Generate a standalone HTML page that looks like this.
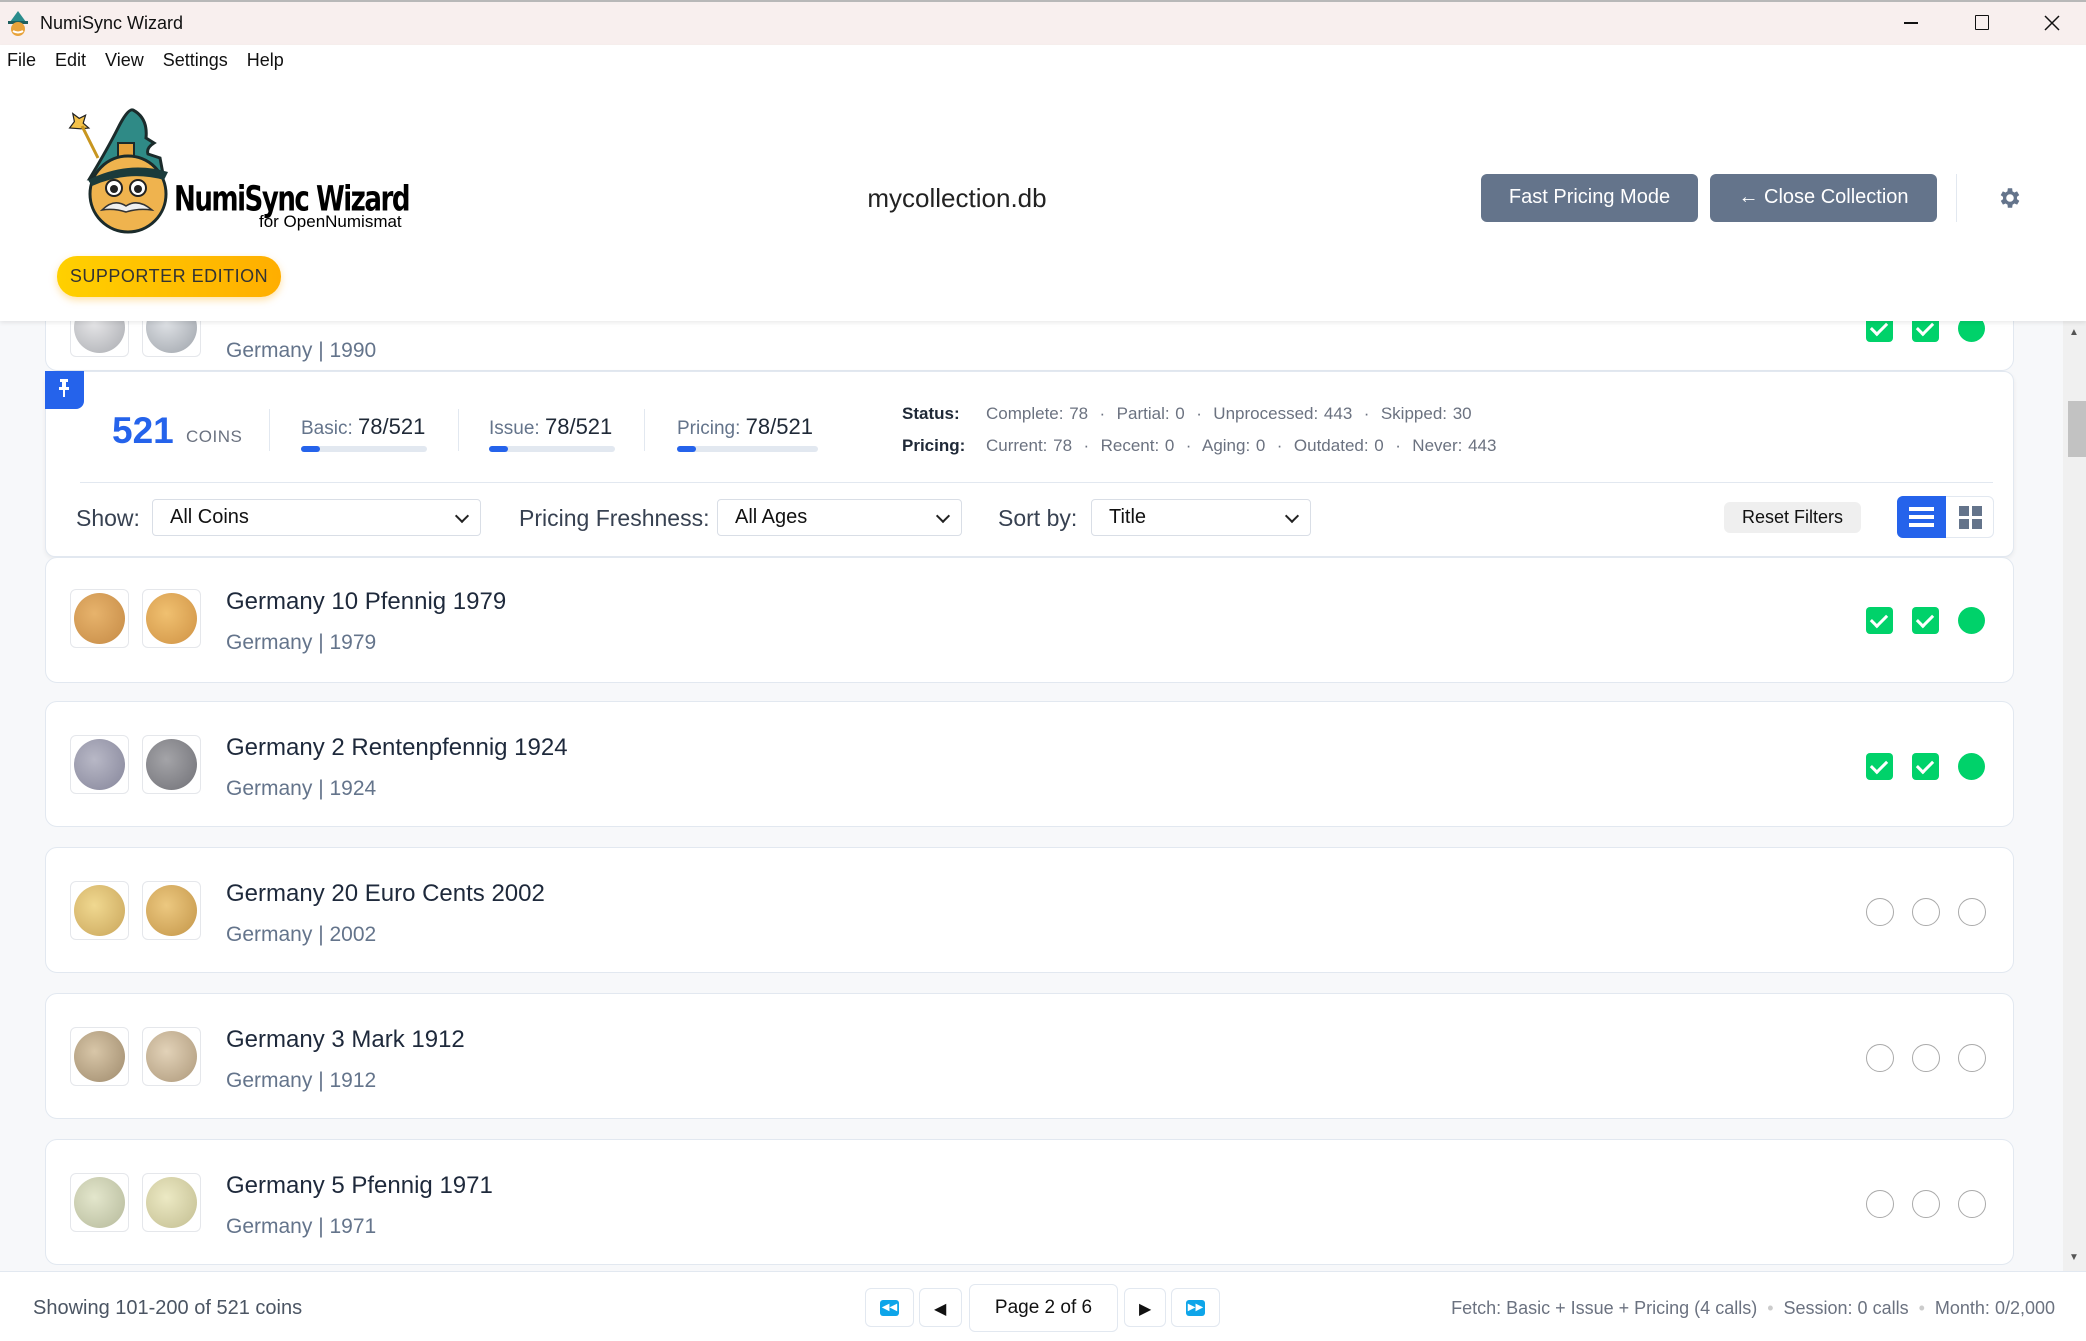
<!DOCTYPE html>
<html><head><meta charset="utf-8">
<style>
*{box-sizing:border-box;margin:0;padding:0}
body{width:2086px;height:1341px;overflow:hidden;position:relative;background:#f7f8fa;font-family:"Liberation Sans",sans-serif;color:#1f2937}
.a{position:absolute}
.card{position:absolute;left:45px;width:1969px;height:126px;background:#fff;border:1px solid #e2e8f0;border-radius:12px}
.coin{position:absolute;width:59px;height:59px;border:1px solid #e5e7eb;border-radius:6px;background:#fff}
.coin i{position:absolute;left:3px;top:3px;width:51px;height:51px;border-radius:50%}
.ct{position:absolute;left:226px;font-size:24px;color:#1e293b}
.cs{position:absolute;left:226px;font-size:21px;color:#64748b}
.ck{position:absolute;width:27px;height:27px;border-radius:4px;background:#00d26a}
.ck:after{content:"";position:absolute;left:8px;top:4px;width:7px;height:13px;border:solid #fff;border-width:0 3px 3px 0;transform:rotate(45deg)}
.dot{position:absolute;width:27px;height:27px;border-radius:50%;background:#00d26a}
.ring{position:absolute;width:28px;height:28px;border-radius:50%;border:1.5px solid #aaa}
.sel{position:absolute;height:37px;border:1px solid #d9dee6;border-radius:4px;background:#fff;font-size:20px;padding:6px 0 0 17px;color:#111}
.sel:after{content:"";position:absolute;right:13px;top:11px;width:8px;height:8px;border:solid #222;border-width:0 2px 2px 0;transform:rotate(45deg)}
.lbl{position:absolute;font-size:23px;color:#374151}
.st{position:absolute;font-size:17px;color:#6b7280}
.st b{color:#1f2937;font-weight:bold}
.pb{position:absolute;height:6px;width:126px;background:#e2e8f0;border-radius:3px}
.pb i{position:absolute;left:0;top:0;height:6px;width:19px;background:#2563eb;border-radius:3px}
.btn{position:absolute;background:#64748b;color:#fff;border-radius:6px;font-size:20px;text-align:center;line-height:47px}
.pg{position:absolute;border:1px solid #e2e8f0;border-radius:6px;background:#fff}
</style></head><body>
<!-- scrollbar -->
<div class="a" style="left:2063px;top:321px;width:23px;height:950px;background:#f0f0f0"></div>
<div class="a" style="left:2068px;top:401px;width:18px;height:56px;background:#c2c2c2"></div>
<div class="a" style="left:2069px;top:327px;font-size:10px;color:#555">▲</div>
<div class="a" style="left:2069px;top:1252px;font-size:10px;color:#555">▼</div>
<!-- partial card -->
<div class="card" style="top:300px;height:71px;border-top:none;border-radius:0 0 12px 12px"></div>
<div class="coin" style="left:70px;top:310px;height:47px;border-top:none"><i style="top:-8px;background:radial-gradient(circle at 40% 40%,#e6e6e8,#a9abb0)"></i></div>
<div class="coin" style="left:142px;top:310px;height:47px;border-top:none"><i style="top:-8px;background:radial-gradient(circle at 40% 40%,#dfe2e6,#9ea3aa)"></i></div>
<div class="cs" style="top:339px">Germany | 1990</div>
<div class="ck" style="left:1866px;top:315px"></div>
<div class="ck" style="left:1912px;top:315px"></div>
<div class="dot" style="left:1958px;top:315px"></div>

<!-- title bar -->
<div class="a" style="left:0;top:0;width:2086px;height:45px;background:#f8efee;border-top:2px solid #b8b8b8"></div>
<svg class="a" style="left:6px;top:10px" width="24" height="26" viewBox="0 0 24 26"><path d="M4 12 L12 1 L20 12 Z" fill="#2a8c8c"/><rect x="2" y="11" width="20" height="3" fill="#1f5f5f"/><circle cx="12" cy="19" r="7" fill="#e8a33b"/><path d="M7 21 q5 3 10 0" stroke="#fff" stroke-width="2" fill="none"/></svg>
<div class="a" style="left:40px;top:13px;font-size:18px;color:#111">NumiSync Wizard</div>
<div class="a" style="left:1904px;top:22px;width:14px;height:1.5px;background:#111"></div>
<div class="a" style="left:1975px;top:15px;width:14px;height:15px;border:1.5px solid #111;border-radius:1px"></div>
<svg class="a" style="left:2044px;top:15px" width="16" height="16"><path d="M1 1L15 15M15 1L1 15" stroke="#111" stroke-width="1.5"/></svg>
<!-- header -->
<div class="a" style="left:0;top:45px;width:2086px;height:276px;background:#fff;box-shadow:0 2px 4px rgba(0,0,0,.08)"></div>
<div class="a" style="left:7px;top:50px;font-size:18px;color:#111;word-spacing:14px">File Edit View Settings Help</div>
<!-- logo -->
<svg class="a" style="left:68px;top:108px" width="130" height="126" viewBox="0 0 130 126">
<path d="M2 20 L8 12 L6 2 L14 8 L22 4 L19 14 L26 20 L16 21 Z" fill="#f4c24a" stroke="#222" stroke-width="1.5" transform="translate(0,4) scale(.8)"/>
<line x1="14" y1="18" x2="30" y2="50" stroke="#c8961f" stroke-width="3"/>
<path d="M22 70 Q40 40 50 20 Q60 0 65 2 Q80 10 78 30 L86 35 Q78 40 80 46 L92 50 L95 66 Q60 58 22 70 Z" fill="#2f8a86" stroke="#1b2b2b" stroke-width="3"/>
<rect x="50" y="35" width="16" height="16" fill="#e8a33b" stroke="#1b2b2b" stroke-width="2"/>
<circle cx="60" cy="86" r="38" fill="#efb34e" stroke="#1b2b2b" stroke-width="3"/>
<circle cx="46" cy="80" r="8" fill="#fff" stroke="#222" stroke-width="2"/><circle cx="70" cy="80" r="8" fill="#fff" stroke="#222" stroke-width="2"/>
<circle cx="46" cy="81" r="4" fill="#222"/><circle cx="70" cy="81" r="4" fill="#222"/>
<path d="M34 102 Q46 90 58 98 Q70 90 84 102 Q70 100 58 104 Q46 100 34 102Z" fill="#f0f0f0" stroke="#333" stroke-width="1.5"/>
<path d="M20 72 Q60 52 100 64 L96 72 Q60 62 24 78 Z" fill="#1b3b3b"/>
</svg>
<div class="a" style="left:174px;top:178px;font-size:29px;font-weight:bold;color:#000;letter-spacing:-1.5px;transform:scaleY(1.2);transform-origin:left top;font-family:'DejaVu Sans Condensed','Liberation Sans Narrow',sans-serif">NumiSync Wizard</div>
<div class="a" style="left:259px;top:212px;font-size:17px;color:#000">for OpenNumismat</div>
<div class="a" style="left:57px;top:256px;width:224px;height:41px;border-radius:20px;background:linear-gradient(90deg,#ffd000,#ffae00);box-shadow:0 3px 8px rgba(255,170,0,.35);font-size:18px;color:#333;text-align:center;line-height:41px;letter-spacing:.5px">SUPPORTER EDITION</div>
<div class="a" style="left:820px;width:274px;top:183px;font-size:26px;color:#222;text-align:center">mycollection.db</div>
<div class="btn" style="left:1481px;top:174px;width:217px;height:48px">Fast Pricing Mode</div>
<div class="btn" style="left:1710px;top:174px;width:227px;height:48px">← Close Collection</div>
<div class="a" style="left:1956px;top:174px;width:1px;height:48px;background:#e2e8f0"></div>
<svg class="a" style="left:1997px;top:185px" width="26" height="26" viewBox="0 0 24 24"><path fill="#64748b" d="M19.4 13a7.5 7.5 0 0 0 0-2l2.1-1.6-2-3.5-2.5 1a7 7 0 0 0-1.7-1L15 3h-4l-.4 2.9a7 7 0 0 0-1.7 1l-2.5-1-2 3.5L6.6 11a7.5 7.5 0 0 0 0 2l-2.1 1.6 2 3.5 2.5-1a7 7 0 0 0 1.7 1L11 21h4l.4-2.9a7 7 0 0 0 1.7-1l2.5 1 2-3.5zM13 15.5a3.5 3.5 0 1 1 0-7 3.5 3.5 0 0 1 0 7z" transform="translate(-1 0)"/></svg>

<!-- stats panel -->
<div class="a" style="left:45px;top:371px;width:1969px;height:186px;background:#fff;border:1px solid #e2e8f0;border-radius:10px;box-shadow:0 2px 5px rgba(0,0,0,.06)"></div>
<div class="a" style="left:45px;top:371px;width:39px;height:38px;background:#2563eb;border-radius:0 0 8px 0"></div>
<svg class="a" style="left:57px;top:378px" width="14" height="20" viewBox="0 0 14 20"><rect x="3" y="1" width="8" height="3" fill="#fff"/><rect x="5" y="3" width="4" height="7" fill="#fff"/><rect x="2" y="9" width="10" height="3" fill="#fff"/><rect x="6" y="12" width="2" height="7" fill="#fff"/></svg>
<div class="a" style="left:112px;top:410px;font-size:37px;font-weight:bold;color:#2563eb">521</div>
<div class="a" style="left:186px;top:427px;font-size:17px;color:#6b7280;letter-spacing:.5px">COINS</div>
<div class="a" style="left:269px;top:409px;width:1px;height:42px;background:#e2e8f0"></div>
<div class="a" style="left:458px;top:409px;width:1px;height:42px;background:#e2e8f0"></div>
<div class="a" style="left:644px;top:409px;width:1px;height:42px;background:#e2e8f0"></div>
<div class="a" style="left:301px;top:414px;font-size:19px;color:#64748b">Basic: <span style="font-size:22px;color:#1f2937">78/521</span></div>
<div class="a" style="left:489px;top:414px;font-size:19px;color:#64748b">Issue: <span style="font-size:22px;color:#1f2937">78/521</span></div>
<div class="a" style="left:677px;top:414px;font-size:19px;color:#64748b">Pricing: <span style="font-size:22px;color:#1f2937">78/521</span></div>
<div class="pb" style="left:301px;top:446px"><i></i></div>
<div class="pb" style="left:489px;top:446px"><i></i></div>
<div class="pb" style="left:677px;top:446px;width:141px"><i></i></div>
<div class="st" style="left:902px;top:404px"><b>Status:</b></div>
<div class="st" style="left:902px;top:436px"><b>Pricing:</b></div>
<div class="st" style="left:986px;top:404px;word-spacing:1px">Complete: 78 &nbsp;·&nbsp; Partial: 0 &nbsp;·&nbsp; Unprocessed: 443 &nbsp;·&nbsp; Skipped: 30</div>
<div class="st" style="left:986px;top:436px;word-spacing:1px">Current: 78 &nbsp;·&nbsp; Recent: 0 &nbsp;·&nbsp; Aging: 0 &nbsp;·&nbsp; Outdated: 0 &nbsp;·&nbsp; Never: 443</div>
<div class="a" style="left:80px;top:482px;width:1913px;height:1px;background:#e2e8f0"></div>
<div class="lbl" style="left:76px;top:505px">Show:</div>
<div class="sel" style="left:152px;top:499px;width:329px">All Coins</div>
<div class="lbl" style="left:519px;top:505px">Pricing Freshness:</div>
<div class="sel" style="left:717px;top:499px;width:245px">All Ages</div>
<div class="lbl" style="left:998px;top:505px">Sort by:</div>
<div class="sel" style="left:1091px;top:499px;width:220px">Title</div>
<div class="a" style="left:1724px;top:502px;width:137px;height:31px;background:#efefef;border-radius:6px;font-size:18px;color:#111;text-align:center;line-height:31px">Reset Filters</div>
<div class="a" style="left:1897px;top:496px;width:97px;height:42px;border:1px solid #e2e8f0;border-radius:6px;background:#fff"></div>
<div class="a" style="left:1897px;top:496px;width:49px;height:42px;background:#2563eb;border-radius:6px 0 0 6px"></div>
<div class="a" style="left:1909px;top:507px;width:25px;height:4px;background:#fff"></div>
<div class="a" style="left:1909px;top:515px;width:25px;height:4px;background:#fff"></div>
<div class="a" style="left:1909px;top:523px;width:25px;height:4px;background:#fff"></div>
<div class="a" style="left:1959px;top:506px;width:10px;height:10px;background:#64748b"></div>
<div class="a" style="left:1972px;top:506px;width:10px;height:10px;background:#64748b"></div>
<div class="a" style="left:1959px;top:519px;width:10px;height:10px;background:#64748b"></div>
<div class="a" style="left:1972px;top:519px;width:10px;height:10px;background:#64748b"></div>

<!-- cards -->
<div class="card" style="top:557px"></div>
<div class="coin" style="left:70px;top:589px"><i style="background:radial-gradient(circle at 40% 40%,#e7b36c,#c58a45)"></i></div>
<div class="coin" style="left:142px;top:589px"><i style="background:radial-gradient(circle at 40% 40%,#f0c070,#cf9244)"></i></div>
<div class="ct" style="top:588px">Germany 10 Pfennig 1979</div>
<div class="cs" style="top:631px">Germany | 1979</div>
<div class="ck" style="left:1866px;top:607px"></div><div class="ck" style="left:1912px;top:607px"></div><div class="dot" style="left:1958px;top:607px"></div>

<div class="card" style="top:701px"></div>
<div class="coin" style="left:70px;top:735px"><i style="background:radial-gradient(circle at 40% 40%,#b8b8c6,#85859a)"></i></div>
<div class="coin" style="left:142px;top:735px"><i style="background:radial-gradient(circle at 40% 40%,#a4a4a8,#707076)"></i></div>
<div class="ct" style="top:734px">Germany 2 Rentenpfennig 1924</div>
<div class="cs" style="top:777px">Germany | 1924</div>
<div class="ck" style="left:1866px;top:753px"></div><div class="ck" style="left:1912px;top:753px"></div><div class="dot" style="left:1958px;top:753px"></div>

<div class="card" style="top:847px"></div>
<div class="coin" style="left:70px;top:881px"><i style="background:radial-gradient(circle at 40% 40%,#f0d890,#c9a55a)"></i></div>
<div class="coin" style="left:142px;top:881px"><i style="background:radial-gradient(circle at 40% 40%,#ecc880,#c39548)"></i></div>
<div class="ct" style="top:880px">Germany 20 Euro Cents 2002</div>
<div class="cs" style="top:923px">Germany | 2002</div>
<div class="ring" style="left:1866px;top:898px"></div><div class="ring" style="left:1912px;top:898px"></div><div class="ring" style="left:1958px;top:898px"></div>

<div class="card" style="top:993px"></div>
<div class="coin" style="left:70px;top:1027px"><i style="background:radial-gradient(circle at 40% 40%,#d8c6a8,#9e8a6c)"></i></div>
<div class="coin" style="left:142px;top:1027px"><i style="background:radial-gradient(circle at 40% 40%,#e2d2b8,#ad987a)"></i></div>
<div class="ct" style="top:1026px">Germany 3 Mark 1912</div>
<div class="cs" style="top:1069px">Germany | 1912</div>
<div class="ring" style="left:1866px;top:1044px"></div><div class="ring" style="left:1912px;top:1044px"></div><div class="ring" style="left:1958px;top:1044px"></div>

<div class="card" style="top:1139px"></div>
<div class="coin" style="left:70px;top:1173px"><i style="background:radial-gradient(circle at 40% 40%,#e3e6cc,#b5b99a)"></i></div>
<div class="coin" style="left:142px;top:1173px"><i style="background:radial-gradient(circle at 40% 40%,#ece9c4,#c2bd90)"></i></div>
<div class="ct" style="top:1172px">Germany 5 Pfennig 1971</div>
<div class="cs" style="top:1215px">Germany | 1971</div>
<div class="ring" style="left:1866px;top:1190px"></div><div class="ring" style="left:1912px;top:1190px"></div><div class="ring" style="left:1958px;top:1190px"></div>

<!-- footer -->
<div class="a" style="left:0;top:1271px;width:2086px;height:70px;background:#fff;border-top:1px solid #e2e8f0"></div>
<div class="a" style="left:33px;top:1297px;font-size:20px;color:#4b5563">Showing 101-200 of 521 coins</div>
<div class="pg" style="left:865px;top:1288px;width:49px;height:39px"><div class="a" style="left:14px;top:11px;width:19px;height:16px;background:#0ea5e9;border-radius:3px;color:#fff;font-size:10px;line-height:16px;text-align:center">◀◀</div></div>
<div class="pg" style="left:919px;top:1288px;width:43px;height:39px"><div class="a" style="left:14px;top:10px;font-size:16px;color:#111">◀</div></div>
<div class="pg" style="left:969px;top:1284px;width:149px;height:48px;font-size:19px;color:#111;text-align:center;line-height:46px">Page 2 of 6</div>
<div class="pg" style="left:1124px;top:1288px;width:42px;height:39px"><div class="a" style="left:14px;top:10px;font-size:16px;color:#111">▶</div></div>
<div class="pg" style="left:1171px;top:1288px;width:49px;height:39px"><div class="a" style="left:14px;top:11px;width:19px;height:16px;background:#0ea5e9;border-radius:3px;color:#fff;font-size:10px;line-height:16px;text-align:center">▶▶</div></div>
<div class="a" style="left:1400px;width:655px;top:1298px;font-size:18px;color:#6b7280;text-align:right">Fetch: Basic + Issue + Pricing (4 calls) &nbsp;<span style="color:#ccc">•</span>&nbsp; Session: 0 calls &nbsp;<span style="color:#ccc">•</span>&nbsp; Month: 0/2,000</div>
</body></html>
